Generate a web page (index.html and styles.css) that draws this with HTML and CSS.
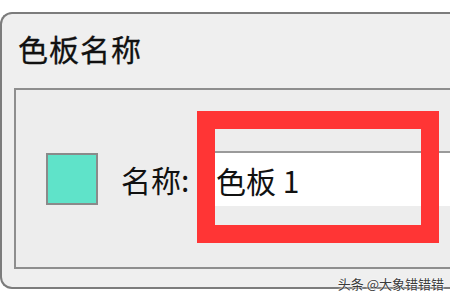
FILE: index.html
```html
<!DOCTYPE html>
<html lang="zh-CN">
<head>
    <meta charset="UTF-8">
    <title>色板名称</title>
    <link rel="stylesheet" href="styles.css">
</head>
<body>
    <div class="window">
        <div class="title">色板名称</div>
        <div class="group">
            <div class="swatch"></div>
            <label class="label" for="name">名称:</label>
            <input class="name-input" id="name" type="text" value="色板 1">
        </div>
    </div>
    <div class="highlight"></div>
    <div class="watermark">头条 @大象错错错</div>
</body>
</html>
```

FILE: styles.css
```css
body {
    margin: 0;
    width: 450px;
    height: 300px;
    overflow: hidden;
    position: relative;
    background: #fff;
    font-family: "Noto Sans CJK SC", "Noto Sans", sans-serif;
    color: #111;
}
.window {
    margin-top: 12px;
    width: 450px;
    height: 277px;
    box-sizing: border-box;
    background: #efefef;
    border: 2px solid #7c7c7c;
    border-right: none;
    border-radius: 12px 0 0 12px;
    padding: 0 0 0 12px;
}
.title {
    font-size: 30px;
    letter-spacing: 1px;
    line-height: 40px;
    padding: 14px 0 0 4px;
    height: 60px;
    -webkit-text-stroke: 0.3px #111;
}
.group {
    display: flex;
    align-items: center;
    height: 181px;
    box-sizing: border-box;
    border: 2px solid #8e8e8e;
    border-right: none;
    background: #ededed;
    padding: 0 0 0 30px;
}
.swatch {
    width: 52px;
    height: 52px;
    box-sizing: border-box;
    background: #5fe3c9;
    border: 2px solid #8a8a8a;
    flex: none;
}
.label {
    font-size: 30px;
    margin-left: 23px;
    width: 84px;
    flex: none;
}
.name-input {
    flex: 1;
    min-width: 0;
    height: 55px;
    box-sizing: border-box;
    border: none;
    border-top: 2px solid #9a9a9a;
    background: #fff;
    font-family: inherit;
    font-size: 30px;
    padding: 0 0 0 11px;
    color: #111;
    outline: none;
}
.highlight {
    position: absolute;
    left: 197px;
    top: 111px;
    width: 242px;
    height: 132px;
    box-sizing: border-box;
    border: 18px solid #ff3535;
}
.watermark {
    position: absolute;
    right: 6px;
    top: 274px;
    font-size: 13px;
    color: #3a3a3a;
    text-shadow: 0 0 2px #fff, 0 0 2px #fff;
}
```
